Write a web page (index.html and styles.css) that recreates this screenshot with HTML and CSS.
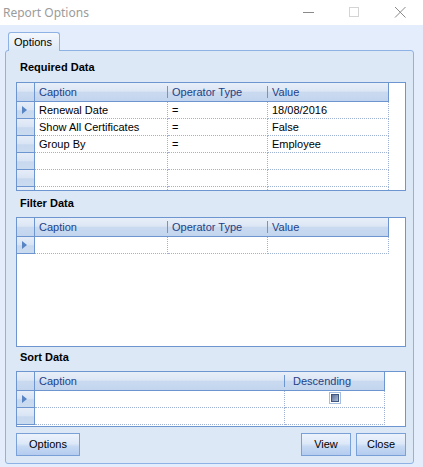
FILE: index.html
```html
<!DOCTYPE html>
<html>
<head>
<meta charset="utf-8">
<link rel="stylesheet" href="styles.css">
</head>
<body>
<div class="titlebar">
  <div class="title">Report Options</div>
  <div class="winctl">
    <svg class="ctl" width="46" height="25" viewBox="0 0 46 25"><line x1="18" y1="12.5" x2="29" y2="12.5" stroke="#8a8a8a" stroke-width="1"/></svg>
    <svg class="ctl" width="46" height="25" viewBox="0 0 46 25"><rect x="18.5" y="7.5" width="9" height="9" fill="none" stroke="#d4d4d4" stroke-width="1"/></svg>
    <svg class="ctl" width="46" height="25" viewBox="0 0 46 25"><path d="M18 7 L28.5 17.5 M28.5 7 L18 17.5" stroke="#8a8a8a" stroke-width="1" fill="none"/></svg>
  </div>
</div>
<div class="client">
  <div class="tabstrip"><div class="tab">Options</div></div>
  <div class="panel">
    <div class="label l1">Required Data</div>
    <div class="grid g1">
      <div class="ghead">
        <div class="rh"></div>
        <div class="hc c-cap sep">Caption</div>
        <div class="hc c-op sep">Operator Type</div>
        <div class="hc c-val last">Value</div>
      </div>
      <div class="row"><div class="rh cur"><span class="tri"></span></div><div class="cell c-cap">Renewal Date</div><div class="cell c-op">=</div><div class="cell c-val">18/08/2016</div></div>
      <div class="row"><div class="rh"></div><div class="cell c-cap">Show All Certificates</div><div class="cell c-op">=</div><div class="cell c-val">False</div></div>
      <div class="row"><div class="rh"></div><div class="cell c-cap">Group By</div><div class="cell c-op">=</div><div class="cell c-val">Employee</div></div>
      <div class="row"><div class="rh"></div><div class="cell c-cap"></div><div class="cell c-op"></div><div class="cell c-val"></div></div>
      <div class="row"><div class="rh"></div><div class="cell c-cap"></div><div class="cell c-op"></div><div class="cell c-val"></div></div>
      <div class="row"><div class="rh"></div><div class="cell c-cap"></div><div class="cell c-op"></div><div class="cell c-val"></div></div>
    </div>
    <div class="label l2">Filter Data</div>
    <div class="grid g2">
      <div class="ghead">
        <div class="rh"></div>
        <div class="hc c-cap sep">Caption</div>
        <div class="hc c-op sep">Operator Type</div>
        <div class="hc c-val last">Value</div>
      </div>
      <div class="row"><div class="rh cur"><span class="tri"></span></div><div class="cell c-cap"></div><div class="cell c-op"></div><div class="cell c-val"></div></div>
    </div>
    <div class="label l3">Sort Data</div>
    <div class="grid g3">
      <div class="ghead">
        <div class="rh"></div>
        <div class="hc c-scap sep">Caption</div>
        <div class="hc c-desc last">Descending</div>
      </div>
      <div class="row"><div class="rh cur"><span class="tri"></span></div><div class="cell c-scap"></div><div class="cell c-desc chk"><span class="box"><span class="inner"></span></span></div></div>
      <div class="row"><div class="rh"></div><div class="cell c-scap"></div><div class="cell c-desc"></div></div>
    </div>
    <div class="buttons">
      <div class="btn b-opt">Options</div>
      <div class="spacer"></div>
      <div class="btn b-view">View</div>
      <div class="btn b-close">Close</div>
    </div>
  </div>
</div>
</body>
</html>
```
FILE: styles.css
```css
* { box-sizing: border-box; }
html, body { margin: 0; padding: 0; }
body {
  width: 423px;
  height: 467px;
  overflow: hidden;
  background: #e3edfb;
  font-family: "Liberation Sans", Arial, sans-serif;
  font-size: 11px;
  color: #000;
}
.titlebar {
  height: 25px;
  background: #fff;
  display: flex;
  align-items: center;
}
.title {
  flex: 1;
  padding-left: 3px;
  color: #9b9b9b;
  font-size: 12px;
  font-family: "Noto Sans", "Liberation Sans", sans-serif;
}
.winctl { display: flex; height: 25px; }
.ctl { display: block; }
.client { height: 442px; padding-top: 7px; }
.tabstrip { display: flex; padding-left: 8px; height: 18px; }
.tab {
  position: relative;
  z-index: 2;
  width: 52px;
  height: 19px;
  border: 1px solid #8db2e3;
  border-bottom: none;
  border-radius: 3px 3px 0 0;
  background: linear-gradient(#f4f8fd, #dce8f6);
  padding-left: 5px;
  line-height: 18px;
}
.panel {
  position: relative;
  z-index: 1;
  margin: 0 9px 0 5px;
  height: 414px;
  border: 1px solid #8db2e3;
  border-radius: 3px;
  background: #dce8f6;
  padding: 0 7px 0 10px;
  display: flex;
  flex-direction: column;
}
.label {
  font-weight: bold;
  line-height: 13px;
  padding-left: 4px;
}
.l1 { height: 31px; padding-top: 10px; }
.l2 { height: 26px; padding-top: 6px; }
.l3 { height: 24px; padding-top: 4px; }
.grid {
  border: 1px solid #6d95d0;
  background: #fff;
  overflow: hidden;
  display: flex;
  flex-direction: column;
  align-items: flex-start;
  flex-shrink: 0;
}
.g1 { height: 109px; }
.g2 { height: 130px; }
.g3 { height: 56px; }
.ghead {
  display: flex;
  height: 19px;
  flex-shrink: 0;
  border-bottom: 1px solid #6d95d0;
  background: linear-gradient(#e8eff9 0%, #dce6f4 45%, #c9daf0 52%, #c3d5ee 100%);
}
.rh {
  width: 18px;
  flex-shrink: 0;
  border-right: 1px solid #6d95d0;
  position: relative;
}
.ghead .rh { height: 18px; }
.hc {
  position: relative;
  height: 18px;
  line-height: 18px;
  padding-left: 4px;
  color: #1f3f86;
  white-space: nowrap;
}
.hc.sep::after {
  content: "";
  position: absolute;
  right: 0;
  top: 3px;
  bottom: 3px;
  width: 1px;
  background: #6d95d0;
}
.hc.last { border-right: 1px solid #6d95d0; }
.c-cap { width: 133px; }
.c-op { width: 100px; }
.c-val { width: 121px; }
.c-scap { width: 250px; }
.c-desc { width: 100px; }
.hc.c-desc { padding-left: 8px; }
.row {
  display: flex;
  height: 17px;
  flex-shrink: 0;
}
.row .rh {
  height: 17px;
  border-bottom: 1px solid #6d95d0;
  background: linear-gradient(#e6edf8 0%, #d9e4f4 48%, #c8d9ef 55%, #cbdbf0 100%);
}
.cell {
  height: 17px;
  line-height: 16px;
  padding-left: 4px;
  border-bottom: 1px dotted #9fb2d4;
  border-right: 1px dotted #9fb2d4;
  white-space: nowrap;
  overflow: hidden;
}
.tri {
  position: absolute;
  left: 5px;
  top: 4px;
  width: 0;
  height: 0;
  border-top: 4px solid transparent;
  border-bottom: 4px solid transparent;
  border-left: 5px solid #5884c4;
}
.chk {
  display: flex;
  justify-content: center;
  padding-left: 0;
  padding-top: 1px;
}
.box {
  width: 12px;
  height: 12px;
  border: 1px solid #a5bddf;
  background: #fff;
  padding: 1px;
  display: block;
}
.inner {
  display: block;
  width: 8px;
  height: 8px;
  border: 1px solid #3f5680;
  background: linear-gradient(135deg, #5c6f98, #aebcd8);
}
.buttons {
  display: flex;
  margin-top: 6px;
  height: 23px;
  gap: 5px;
}
.spacer { flex: 1; }
.btn {
  height: 23px;
  border: 1px solid #7aa0d8;
  background: linear-gradient(#edf3fc 0%, #dde8f8 45%, #c6d9f3 60%, #b4ccef 100%);
  text-align: center;
  line-height: 21px;
}
.b-opt { width: 64px; }
.b-view { width: 50px; }
.b-close { width: 50px; }
```
